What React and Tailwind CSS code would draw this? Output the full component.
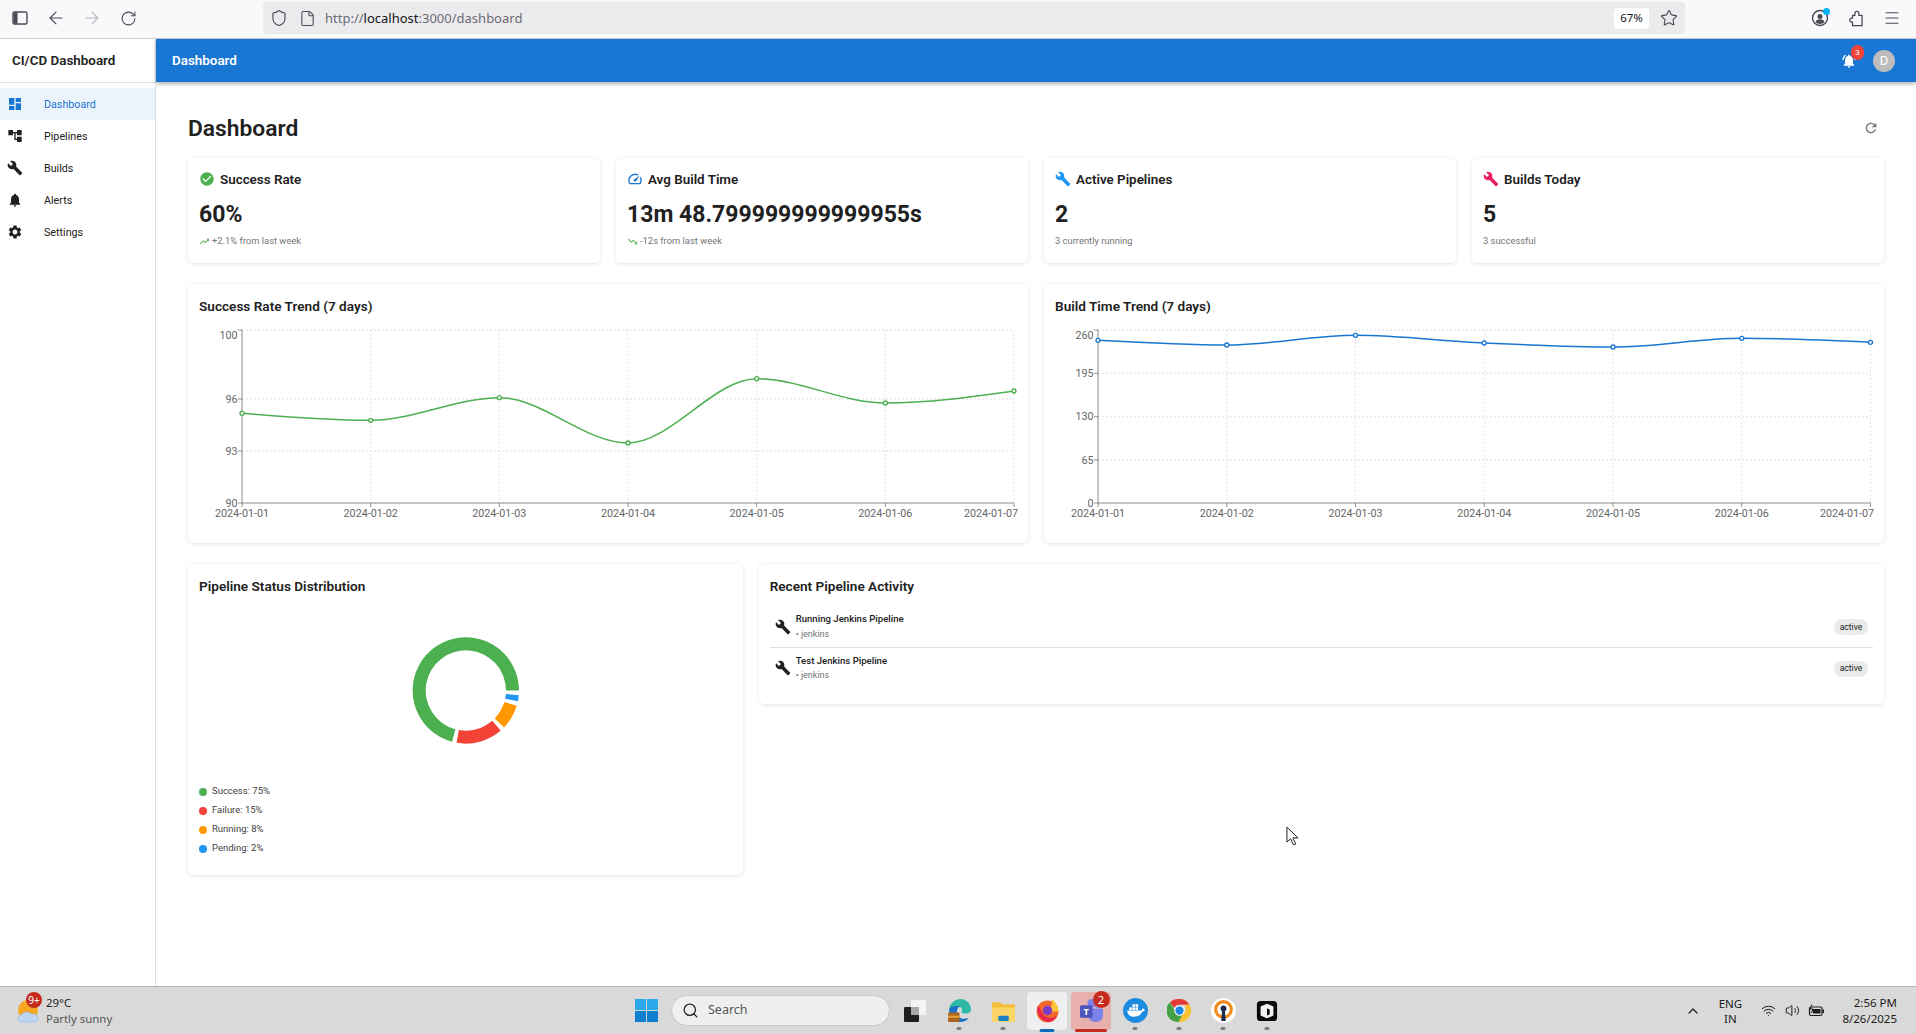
// CI/CD dashboard inside a browser window, Windows taskbar below
import React from "react";
import {
  ArrowLeft,
  ArrowRight,
  RotateCw,
  Shield,
  File,
  Star,
  Menu,
  ChevronUp,
  Wifi,
  Volume2,
  Search,
} from "lucide-react";

const ICONS = {
  dashboard: "M3 13h8V3H3v10zm0 8h8v-6H3v6zm10 0h8V11h-8v10zm0-18v6h8V3h-8z",
  tree: "M22 11V3h-7v3H9V3H2v8h7V8h2v10h4v3h7v-8h-7v3h-2V8h2v3z",
  build:
    "M22.7 19l-9.1-9.1c.9-2.3.4-5-1.5-6.9-2-2-5-2.4-7.4-1.3L9 6 6 9 1.6 4.7C.4 7.1.9 10.1 2.9 12.1c1.9 1.9 4.6 2.4 6.9 1.5l9.1 9.1c.4.4 1 .4 1.4 0l2.3-2.3c.5-.4.5-1.1.1-1.4z",
  bell: "M12 22c1.1 0 2-.9 2-2h-4c0 1.1.89 2 2 2zm6-6v-5c0-3.07-1.64-5.64-4.5-6.32V4c0-.83-.67-1.5-1.5-1.5s-1.5.67-1.5 1.5v.68C7.63 5.36 6 7.92 6 11v5l-2 2v1h16v-1l-2-2z",
  bellActive:
    "M7.58 4.08L6.15 2.65C3.75 4.48 2.17 7.3 2.03 10.5h2c.15-2.65 1.51-4.97 3.55-6.42zm12.39 6.42h2c-.15-3.2-1.73-6.02-4.12-7.85l-1.42 1.43c2.02 1.45 3.39 3.77 3.54 6.42zM18 11c0-3.07-1.64-5.64-4.5-6.32V4c0-.83-.67-1.5-1.5-1.5s-1.5.67-1.5 1.5v.68C7.63 5.36 6 7.92 6 11v5l-2 2v1h16v-1l-2-2v-5zm-6 11c.14 0 .27-.01.4-.04.65-.14 1.18-.58 1.44-1.18.1-.24.15-.5.15-.78h-4c.01 1.1.9 2 2.01 2z",
  settings:
    "M19.14 12.94c.04-.3.06-.61.06-.94 0-.32-.02-.64-.07-.94l2.03-1.58c.18-.14.23-.41.12-.61l-1.92-3.32c-.12-.22-.37-.29-.59-.22l-2.39.96c-.5-.38-1.03-.7-1.62-.94l-.36-2.54c-.04-.24-.24-.41-.48-.41h-3.84c-.24 0-.43.17-.47.41l-.36 2.54c-.59.24-1.13.57-1.62.94l-2.39-.96c-.22-.08-.47 0-.59.22L2.74 8.87c-.12.21-.08.47.12.61l2.03 1.58c-.05.3-.09.63-.09.94s.02.64.07.94l-2.03 1.58c-.18.14-.23.41-.12.61l1.92 3.32c.12.22.37.29.59.22l2.39-.96c.5.38 1.03.7 1.62.94l.36 2.54c.05.24.24.41.48.41h3.84c.24 0 .44-.17.47-.41l.36-2.54c.59-.24 1.13-.56 1.62-.94l2.39.96c.22.08.47 0 .59-.22l1.92-3.32c.12-.22.07-.47-.12-.61l-2.01-1.58zM12 15.6c-1.98 0-3.6-1.62-3.6-3.6s1.62-3.6 3.6-3.6 3.6 1.62 3.6 3.6-1.62 3.6-3.6 3.6z",
  check:
    "M12 2C6.48 2 2 6.48 2 12s4.48 10 10 10 10-4.48 10-10S17.52 2 12 2zm-2 15l-5-5 1.41-1.41L10 14.17l7.59-7.59L19 8l-9 9z",
  speed:
    "M20.38 8.57l-1.23 1.85a8 8 0 0 1-.22 7.58H5.07A8 8 0 0 1 15.58 6.85l1.85-1.23A10 10 0 0 0 3.35 19a2 2 0 0 0 1.72 1h13.85a2 2 0 0 0 1.74-1 10 10 0 0 0-.27-10.44zm-9.79 6.84a2 2 0 0 0 2.83 0l5.66-8.49-8.49 5.66a2 2 0 0 0 0 2.83z",
  up: "M16 6l2.29 2.29-4.88 4.88-4-4L2 16.59 3.41 18l6-6 4 4 6.3-6.29L22 12V6z",
  down: "M16 18l2.29-2.29-4.88-4.88-4 4L2 7.41 3.41 6l6 6 4-4 6.3 6.29L22 12v6z",
  refresh:
    "M17.65 6.35C16.2 4.9 14.21 4 12 4c-4.42 0-7.99 3.58-7.99 8s3.57 8 7.99 8c3.73 0 6.84-2.55 7.73-6h-2.08c-.82 2.33-3.04 4-5.65 4-3.31 0-6-2.69-6-6s2.69-6 6-6c1.66 0 3.14.69 4.22 1.78L13 11h7V4l-2.35 2.35z",
};

const Icon = ({ name, className }) => (
  <svg viewBox="0 0 24 24" className={className} fill="currentColor">
    <path d={ICONS[name]} />
  </svg>
);

const navItems = [
  { label: "Dashboard", icon: "dashboard", active: true },
  { label: "Pipelines", icon: "tree" },
  { label: "Builds", icon: "build" },
  { label: "Alerts", icon: "bell" },
  { label: "Settings", icon: "settings" },
];

const stats = [
  { title: "Success Rate", icon: "check", iconClass: "text-[#4caf50]", value: "60%", trend: "up", sub: "+2.1% from last week" },
  { title: "Avg Build Time", icon: "speed", iconClass: "text-[#1976d2]", value: "13m 48.799999999999955s", trend: "down", sub: "-12s from last week" },
  { title: "Active Pipelines", icon: "build", iconClass: "text-[#2196f3]", value: "2", sub: "3 currently running" },
  { title: "Builds Today", icon: "build", iconClass: "text-[#e91e63]", value: "5", sub: "3 successful" },
];

const days = ["2024-01-01", "2024-01-02", "2024-01-03", "2024-01-04", "2024-01-05", "2024-01-06", "2024-01-07"];

const successChart = {
  title: "Success Rate Trend (7 days)",
  viewBox: "199 325 818 205",
  left: 242,
  right: 1014,
  color: "#4caf50",
  ticks: [
    { label: "100", y: 330, textY: 335 },
    { label: "96", y: 399 },
    { label: "93", y: 451 },
    { label: "90", y: 503, textY: 503 },
  ],
  points: [413.3, 420.3, 397.7, 443, 378.7, 403, 391],
  lastLabelEnd: 1018,
};

const buildChart = {
  title: "Build Time Trend (7 days)",
  viewBox: "1055 325 818 205",
  left: 1098,
  right: 1870.5,
  color: "#1976d2",
  ticks: [
    { label: "260", y: 330, textY: 335 },
    { label: "195", y: 373.3 },
    { label: "130", y: 416.7 },
    { label: "65", y: 460 },
    { label: "0", y: 503, textY: 503 },
  ],
  points: [340.3, 345, 335.3, 343, 347, 338.3, 342.3],
  lastLabelEnd: 1874,
};

// same curve as recharts' type="monotone"
const monotonePath = (pts) => {
  const n = pts.length;
  const s = [];
  for (let i = 0; i < n - 1; i++) {
    s.push((pts[i + 1][1] - pts[i][1]) / (pts[i + 1][0] - pts[i][0]));
  }
  const t = new Array(n).fill(0);
  for (let i = 1; i < n - 1; i++) {
    const h0 = pts[i][0] - pts[i - 1][0];
    const h1 = pts[i + 1][0] - pts[i][0];
    const p = (s[i - 1] * h1 + s[i] * h0) / (h0 + h1);
    t[i] =
      (Math.sign(s[i - 1]) + Math.sign(s[i])) *
      Math.min(Math.abs(s[i - 1]), Math.abs(s[i]), 0.5 * Math.abs(p));
  }
  t[0] = (3 * s[0] - t[1]) / 2;
  t[n - 1] = (3 * s[n - 2] - t[n - 2]) / 2;
  let d = `M${pts[0][0]},${pts[0][1]}`;
  for (let i = 0; i < n - 1; i++) {
    const dx = (pts[i + 1][0] - pts[i][0]) / 3;
    d += `C${pts[i][0] + dx},${pts[i][1] + dx * t[i]} ${pts[i + 1][0] - dx},${pts[i + 1][1] - dx * t[i + 1]} ${pts[i + 1][0]},${pts[i + 1][1]}`;
  }
  return d;
};

const TOP = 330;
const BOTTOM = 503;

const TrendChart = ({ chart }) => {
  const step = (chart.right - chart.left) / 6;
  const xs = days.map((_, i) => chart.left + step * i);
  const pts = chart.points.map((y, i) => [xs[i], y]);
  return (
    <svg viewBox={chart.viewBox} className="block w-[818px] h-[205px] overflow-visible">
      {chart.ticks.map((t) => (
        <line key={t.label} x1={chart.left} x2={chart.right} y1={t.y} y2={t.y} stroke="#d6d6d6" strokeWidth="0.8" strokeDasharray="2 2" />
      ))}
      {xs.map((x) => (
        <line key={x} x1={x} x2={x} y1={TOP} y2={BOTTOM} stroke="#dedede" strokeWidth="0.8" strokeDasharray="2 2" />
      ))}
      <line x1={chart.left} x2={chart.left} y1={TOP} y2={BOTTOM} stroke="#777" strokeWidth="0.8" />
      <line x1={chart.left} x2={chart.right} y1={BOTTOM} y2={BOTTOM} stroke="#777" strokeWidth="0.8" />
      {chart.ticks.map((t) => (
        <g key={t.label}>
          <line x1={chart.left - 4} x2={chart.left} y1={t.y} y2={t.y} stroke="#777" strokeWidth="0.8" />
          <text x={chart.left - 4.5} y={(t.textY ?? t.y) + 3.7} textAnchor="end" fontSize="10.72" fill="#666">
            {t.label}
          </text>
        </g>
      ))}
      {days.map((d, i) => (
        <g key={d}>
          <line x1={xs[i]} x2={xs[i]} y1={BOTTOM} y2={BOTTOM + 4} stroke="#777" strokeWidth="0.8" />
          <text
            x={i === 6 ? chart.lastLabelEnd : xs[i]}
            y={BOTTOM + 14}
            textAnchor={i === 6 ? "end" : "middle"}
            fontSize="10.72"
            fill="#666"
          >
            {d}
          </text>
        </g>
      ))}
      <path d={monotonePath(pts)} fill="none" stroke={chart.color} strokeWidth="1.5" />
      {pts.map(([x, y]) => (
        <circle key={x} cx={x} cy={y} r="2" fill="#fff" stroke={chart.color} strokeWidth="1.34" />
      ))}
    </svg>
  );
};

const slices = [
  { label: "Success: 75%", color: "#4caf50", from: 0, to: 255 },
  { label: "Failure: 15%", color: "#f44336", from: 260, to: 311 },
  { label: "Running: 8%", color: "#ff9800", from: 316, to: 343.2 },
  { label: "Pending: 2%", color: "#2196f3", from: 348.2, to: 355 },
];

const arcPath = (from, to) => {
  const cx = 466;
  const cy = 690.5;
  const R = 53.2;
  const r = 40.2;
  const pt = (rad, a) => {
    const t = (a * Math.PI) / 180;
    return `${cx + rad * Math.cos(t)},${cy - rad * Math.sin(t)}`;
  };
  const large = to - from > 180 ? 1 : 0;
  return `M${pt(R, from)}A${R},${R} 0 ${large} 0 ${pt(R, to)}L${pt(r, to)}A${r},${r} 0 ${large} 1 ${pt(r, from)}Z`;
};

const activity = [
  { name: "Running Jenkins Pipeline", row: "pt-[14px] pb-[7px] border-b border-[#e0e0e0]", gap: "mt-[3px]" },
  { name: "Test Jenkins Pipeline", row: "pt-[7px] pb-[7px]", gap: "mt-[2px]" },
];

const cardClass =
  "bg-white rounded-[5px] shadow-[0_1px_4px_rgba(0,0,0,0.1),0_0_2px_rgba(0,0,0,0.03)]";

const BrowserBar = () => (
  <div className="flex items-start h-[39px] shrink-0 pt-[2px] bg-[#f9f9fb] border-b border-[#cfcfd8] text-[#4a4a55] font-['Noto_Sans',sans-serif]">
    <div className="flex pl-[2px]">
      <div className="w-[36px] h-[32px] flex items-center justify-center">
        <svg viewBox="0 0 18 18" className="w-[18px] h-[18px]" fill="none" stroke="currentColor" strokeWidth="1.4">
          <rect x="2" y="3" width="14" height="12" rx="1.500" />
          <rect x="2.500" y="3.500" width="4" height="11" fill="currentColor" stroke="none" />
        </svg>
      </div>
      <div className="w-[36px] h-[32px] flex items-center justify-center">
        <ArrowLeft size={20} strokeWidth={1.4} />
      </div>
      <div className="w-[36px] h-[32px] flex items-center justify-center text-[#b4b4ba]">
        <ArrowRight size={20} strokeWidth={1.4} />
      </div>
      <div className="w-[36px] h-[32px] flex items-center justify-center">
        <RotateCw size={17} strokeWidth={1.5} />
      </div>
    </div>
    <div className="flex-1 mx-[117px] h-[32px] bg-[#ebebed] rounded-[4px] flex items-center pl-[7px] pr-[7px]">
      <Shield size={18} strokeWidth={1.5} />
      <File size={17} strokeWidth={1.5} className="ml-[11px]" />
      <span className="ml-[9px] mt-[1px] text-[13px] text-[#6b6b75]">
        http://<span className="text-[#15141a]">localhost</span>:3000/dashboard
      </span>
      <div className="ml-auto w-[35px] h-[21px] bg-white rounded-[4px] flex items-center justify-center text-[11.5px] text-[#15141a]">
        67%
      </div>
      <Star size={18} strokeWidth={1.5} className="ml-[11px]" />
    </div>
    <div className="flex pr-[6px]">
      <div className="relative w-[36px] h-[32px] flex items-center justify-center">
        <svg viewBox="0 0 18 18" className="w-[18px] h-[18px]" fill="currentColor">
          <circle cx="9" cy="9" r="7.500" fill="none" stroke="currentColor" strokeWidth="1.400" />
          <circle cx="9" cy="7.500" r="2.500" />
          <path d="M4.500 13c.5-2 2.200-2.800 4.500-2.800s4 .8 4.500 2.800c-1 1.200-2.700 2-4.500 2s-3.500-.8-4.500-2z" />
        </svg>
        <span className="absolute top-[6px] right-[8px] w-[7px] h-[7px] rounded-full bg-[#00b3f4]" />
      </div>
      <div className="w-[36px] h-[32px] flex items-center justify-center">
        <svg viewBox="0 0 24 24" className="w-[19px] h-[19px]" fill="none" stroke="currentColor" strokeWidth="1.600">
          <path d="M7 21h12V8h-4V5.500a2.500 2.500 0 0 0-5 0V8H7v3.500H6a2.500 2.500 0 0 0 0 5h1z" />
        </svg>
      </div>
      <div className="w-[36px] h-[32px] flex items-center justify-center">
        <Menu size={18} strokeWidth={1.4} />
      </div>
    </div>
  </div>
);

const Sidebar = () => (
  <aside className="w-[156px] shrink-0 border-r border-[#e0e0e0] bg-white">
    <div className="h-[44px] border-b border-[#e0e0e0] flex items-center pl-[12px] pt-[1px] text-[13.4px] font-semibold text-[#212121]">
      CI/CD Dashboard
    </div>
    <nav className="pt-[5px]">
      {navItems.map((item) => (
        <div
          key={item.label}
          className={`h-[32px] flex items-center pl-[7px] text-[10.72px] ${
            item.active ? "bg-[#ebf3fb] text-[#1976d2]" : "text-[#212121]"
          }`}
        >
          <Icon name={item.icon} className="w-[16px] h-[16px] mr-[21px]" />
          <span className="pt-[2px]">{item.label}</span>
        </div>
      ))}
    </nav>
  </aside>
);

const StatCard = ({ stat }) => (
  <div className={`${cardClass} h-[105px] px-[11px] pt-[11px]`}>
    <div className="flex items-center h-[20px] text-[#212121]">
      <Icon name={stat.icon} className={`w-[16px] h-[16px] mr-[5px] ${stat.iconClass}`} />
      <span className="pt-[2px] text-[13.4px] font-semibold">{stat.title}</span>
    </div>
    <div className="mt-[11.5px] h-[27px] leading-[27px] text-[23px] font-bold text-[#212121]">
      {stat.value}
    </div>
    <div className="mt-[7.5px] flex items-center h-[12px] text-[9.38px] text-[#757575]">
      {stat.trend && <Icon name={stat.trend} className="w-[11px] h-[11px] mr-[2px] text-[#4caf50]" />}
      {stat.sub}
    </div>
  </div>
);

const CardTitle = ({ children }) => (
  <div className="h-[24px] pb-[1px] flex items-center text-[13.6px] font-semibold text-[#212121]">{children}</div>
);

const Content = () => (
  <div className="flex-1 px-[32px] pt-[30px]">
    <div className="h-[30px] flex items-center justify-between mb-[16px]">
      <h1 className="pt-[5px] text-[22.8px] font-semibold text-[#212121]">Dashboard</h1>
      <Icon name="refresh" className="w-[16px] h-[16px] mr-[5px] mt-[1px] text-[#757575]" />
    </div>

    <div className="flex flex-col gap-[21px]">
      <div className="grid grid-cols-4 gap-[16px]">
        {stats.map((s) => (
          <StatCard key={s.title} stat={s} />
        ))}
      </div>

      <div className="grid grid-cols-2 gap-[16px]">
        {[successChart, buildChart].map((c) => (
          <div key={c.title} className={`${cardClass} h-[259px] px-[11px] pt-[11px]`}>
            <CardTitle>{c.title}</CardTitle>
            <div className="mt-[6px]">
              <TrendChart chart={c} />
            </div>
          </div>
        ))}
      </div>

      <div className="grid grid-cols-3 gap-[16px] items-start">
        <div className={`${cardClass} h-[311px] px-[11px] pt-[11px]`}>
          <CardTitle>Pipeline Status Distribution</CardTitle>
          <svg viewBox="199 600 533 180" className="block w-full h-[180px] mt-[1px]">
            {slices.map((s) => (
              <path key={s.label} d={arcPath(s.from, s.to)} fill={s.color} />
            ))}
          </svg>
          <div className="mt-[2px]">
            {slices.map((s) => (
              <div key={s.label} className="h-[19px] flex items-center text-[9.5px] text-[#424242]">
                <span className="w-[8px] h-[8px] rounded-full mr-[5px]" style={{ backgroundColor: s.color }} />
                {s.label}
              </div>
            ))}
          </div>
        </div>

        <div className={`${cardClass} col-span-2 h-[140px] pl-[11px] pr-[11px] pt-[11px]`}>
          <CardTitle>Recent Pipeline Activity</CardTitle>
          {activity.map((a) => (
            <div key={a.name} className={`flex items-center pl-[5px] pr-[5px] ${a.row}`}>
              <Icon name="build" className="w-[16px] h-[16px] mr-[5px] text-[#212121]" />
              <div className="flex-1">
                <div className="text-[9.6px] leading-[12px] font-medium text-[#212121]">{a.name}</div>
                <div className={`text-[9px] leading-[12px] text-[#757575] ${a.gap}`}>• jenkins</div>
              </div>
              <span className="mt-[1px] w-[34px] h-[16px] rounded-full bg-[#ebebeb] flex items-center justify-center text-[8.6px] text-[#212121]">
                active
              </span>
            </div>
          ))}
        </div>
      </div>
    </div>
  </div>
);

const TaskSlot = ({ children, box, bar, dot = true }) => (
  <div className="relative w-[44px] h-[48px] flex items-center justify-center">
    {box && <span className={`absolute top-[5px] bottom-[5px] left-[2px] right-[2px] rounded-[4px] ${box}`} />}
    <span className="relative">{children}</span>
    {bar && <span className={`absolute bottom-[3px] left-1/2 -translate-x-1/2 h-[2.5px] rounded-full ${bar}`} />}
    {dot && !bar && <span className="absolute bottom-[5px] left-1/2 -translate-x-1/2 w-[5px] h-[2.5px] rounded-full bg-[#7d7d7d]" />}
  </div>
);

const Taskbar = () => (
  <div className="flex items-center h-[48px] shrink-0 bg-[#d9d9d9] border-t border-[#b4b4b4] font-['Noto_Sans',sans-serif] text-[#1c1c1c]">
    <div className="w-[624px] shrink-0 flex items-center pl-[17px]">
      <div className="relative w-[24px] h-[28px]">
        <svg viewBox="0 0 24 28" className="w-[24px] h-[28px]">
          <circle cx="11" cy="13" r="10" fill="#f7a823" />
          <path d="M5 25c-3 0-4-2-4-4s2-3.500 4-3.500c1-3 7-3.500 9-.500 3-.500 7 .500 7 4s-2 4-4 4z" fill="#bcd6f2" stroke="#8fb4e0" strokeWidth="0.6" />
        </svg>
        <span className="absolute -top-[5px] left-[9px] w-[16px] h-[16px] rounded-full bg-[#c42b1c] text-white text-[10px] leading-[16px] text-center">
          9+
        </span>
      </div>
      <div className="ml-[5px] text-[11.4px] leading-[16px]">
        <div>29°C</div>
        <div className="text-[#555]">Partly sunny</div>
      </div>
    </div>

    <div className="w-[44px] shrink-0 flex justify-center">
      <svg viewBox="0 0 24 24" className="w-[23px] h-[23px]">
        <rect x="0" y="0" width="11.500" height="11.500" fill="#29a8ea" />
        <rect x="12.500" y="0" width="11.500" height="11.500" fill="#29a8ea" />
        <rect x="0" y="12.500" width="11.500" height="11.500" fill="#0f7fd0" />
        <rect x="12.500" y="12.500" width="11.500" height="11.500" fill="#0f7fd0" />
      </svg>
    </div>

    <div className="ml-[3px] w-[219px] h-[31px] rounded-full bg-[#efefef] border border-[#c9c9c9] flex items-center pl-[10px] text-[12.5px] text-[#555]">
      <Search size={17} strokeWidth={1.8} className="text-[#222]" />
      <span className="ml-[9px]">Search</span>
    </div>

    <div className="ml-[3px] flex">
      <TaskSlot dot={false}>
        <svg viewBox="0 0 24 24" className="block w-[24px] h-[24px]">
          <rect x="8" y="1" width="15" height="15" rx="1" fill="#f4f4f4" />
          <rect x="1" y="8" width="15" height="15" rx="1" fill="#1f1f1f" />
          <rect x="8" y="8" width="8" height="8" fill="#a8a8a8" />
        </svg>
      </TaskSlot>
      <TaskSlot>
        <svg viewBox="0 0 24 24" className="block w-[25px] h-[25px]">
          <path d="M2 12C2 6 7 1 13 1c6 0 10 5 10 10 0 3-3 4-6 4-2 0-3-1-3-2 1-2 0-5-4-5-4 0-8 2-8 4z" fill="#2fb8a6" />
          <path d="M2 12c0 6 5 11 11 11 3 0 6-1 8-4-5 2-10 1-11-4-1-3 0-6 3-7-6-1-11 0-11 4z" fill="#1a73c9" />
          <rect x="1" y="14" width="11" height="9" rx="1" fill="#a8651c" />
          <rect x="1" y="17" width="11" height="2" fill="#e8a33d" />
        </svg>
      </TaskSlot>
      <TaskSlot>
        <svg viewBox="0 0 24 24" className="block w-[25px] h-[25px]">
          <path d="M1 5a1 1 0 0 1 1-1h7l2 2h11a1 1 0 0 1 1 1v15H1z" fill="#f2bd3b" />
          <path d="M1 9h22v13a1 1 0 0 1-1 1H2a1 1 0 0 1-1-1z" fill="#fbd667" />
          <rect x="7" y="17" width="10" height="5" rx="1" fill="#1d7fc4" />
        </svg>
      </TaskSlot>
      <TaskSlot box="bg-[#efefef]" bar="w-[15px] bg-[#0f6cbd]">
        <svg viewBox="0 0 24 24" className="block w-[25px] h-[25px]">
          <circle cx="12" cy="13" r="10.500" fill="#f2682a" />
          <path d="M16 1c4 3 6.500 7 6.500 12H14c1-3 3-7 2-12z" fill="#ffc53a" />
          <path d="M3 7c-2 6 1 14 9 16 5 0 8-3 9-6-4 3-10 3-13-1C6 13 5 10 3 7z" fill="#e8254f" />
          <circle cx="12" cy="12" r="4.500" fill="#7a3bc9" />
        </svg>
      </TaskSlot>
      <TaskSlot box="bg-[#e8b0ac]" bar="w-[32px] bg-[#c42b1c]">
        <div className="relative">
          <svg viewBox="0 0 24 24" className="block w-[25px] h-[25px]">
            <circle cx="18" cy="6" r="3.500" fill="#7b83eb" />
            <circle cx="12" cy="5" r="4" fill="#7b83eb" />
            <path d="M9 10h13a1 1 0 0 1 1 1v6c0 3-2 6-7 6s-7-3-7-6z" fill="#7b83eb" />
            <rect x="1" y="7" width="12" height="12" rx="1.500" fill="#4b53bc" />
            <text x="7" y="16.500" textAnchor="middle" fontSize="9" fontWeight="700" fill="#fff">T</text>
          </svg>
          <span className="absolute -top-[7px] -right-[6px] w-[17px] h-[17px] rounded-full bg-[#c42b1c] text-white text-[11px] leading-[17px] text-center">
            2
          </span>
        </div>
      </TaskSlot>
      <TaskSlot>
        <svg viewBox="0 0 24 24" className="block w-[25px] h-[25px]">
          <circle cx="12" cy="12" r="12" fill="#1d8ce0" />
          <path d="M4 12h13c1 0 1.500-1 1.500-2 1 0 2 .500 2.500 1.500-.500 1-1.500 1.500-2.500 1.500-1 3-4 5-8 5-4 0-6-2-6.500-6z" fill="#fff" />
          <rect x="6" y="9" width="2.500" height="2.500" fill="#fff" />
          <rect x="9" y="9" width="2.500" height="2.500" fill="#fff" />
          <rect x="12" y="9" width="2.500" height="2.500" fill="#fff" />
          <rect x="9" y="6" width="2.500" height="2.500" fill="#fff" />
          <rect x="12" y="6" width="2.500" height="2.500" fill="#fff" />
        </svg>
      </TaskSlot>
      <TaskSlot>
        <svg viewBox="0 0 24 24" className="block w-[25px] h-[25px]">
          <path d="M12 1a11 11 0 0 1 9.500 5.500H12a5.500 5.500 0 0 0-5 3L3 4a11 11 0 0 1 9-3z" fill="#e53935" />
          <path d="M21.500 6.500A11 11 0 0 1 11 23l4.500-8a5.500 5.500 0 0 0 1-8.500z" fill="#fbc02d" />
          <path d="M3 4l4.500 8a5.500 5.500 0 0 0 8 3L11 23A11 11 0 0 1 3 4z" fill="#43a047" />
          <circle cx="12" cy="12" r="4.500" fill="#1e88e5" stroke="#fff" strokeWidth="1" />
        </svg>
      </TaskSlot>
      <TaskSlot>
        <svg viewBox="0 0 24 24" className="block w-[25px] h-[25px]">
          <circle cx="12" cy="12" r="12" fill="#fff" />
          <circle cx="12" cy="11" r="7.500" fill="none" stroke="#f08a1d" strokeWidth="3" />
          <circle cx="12" cy="10" r="2.800" fill="#1b2a4a" />
          <path d="M10.800 11h2.400l1 11h-4.400z" fill="#1b2a4a" />
        </svg>
      </TaskSlot>
      <TaskSlot>
        <svg viewBox="0 0 24 24" className="block w-[22px] h-[22px]">
          <rect x="1" y="1" width="22" height="22" rx="4" fill="#0a0a0a" />
          <path d="M12 4l7 3v10l-7 3-7-3V7z" fill="#f2f2f2" />
          <path d="M12 9l3 1.500v5L12 17z" fill="#0a0a0a" />
        </svg>
      </TaskSlot>
    </div>

    <div className="ml-auto flex items-center pr-[19px] text-[11.5px]">
      <ChevronUp size={16} strokeWidth={1.8} />
      <div className="ml-[13px] w-[32px] text-center leading-[15px]">
        <div>ENG</div>
        <div>IN</div>
      </div>
      <Wifi size={15} strokeWidth={1.6} className="ml-[15px]" />
      <Volume2 size={15} strokeWidth={1.6} className="ml-[9px]" />
      <svg viewBox="0 0 17 14" className="ml-[8px] w-[17px] h-[14px]" fill="none" stroke="#1c1c1c" strokeWidth="1.200">
        <rect x="1.500" y="3" width="12.500" height="8.500" rx="1.500" />
        <rect x="5" y="5" width="7.500" height="4.500" fill="#1c1c1c" stroke="none" />
        <rect x="14.500" y="5.500" width="1.500" height="3.500" fill="#1c1c1c" stroke="none" />
        <path d="M4 .5L2 5h3L3.500 9" strokeWidth="1" />
      </svg>
      <div className="ml-[17px] text-right leading-[16px]">
        <div>2:56 PM</div>
        <div>8/26/2025</div>
      </div>
    </div>
  </div>
);

export default function App() {
  return (
    <div className="relative flex flex-col h-screen w-full overflow-hidden bg-white font-[Roboto,sans-serif]">
      <BrowserBar />
      <div className="flex flex-1 min-h-0">
        <Sidebar />
        <main className="flex-1 min-w-0 flex flex-col">
          <header className="relative h-[43px] shrink-0 bg-[#1976d2] shadow-[0_2px_4px_rgba(0,0,0,0.3)] flex items-center pl-[16px] pr-[21px] text-white">
            <span className="pt-[1px] text-[13.4px] font-semibold">Dashboard</span>
            <div className="ml-auto relative w-[16px] h-[16px] mr-[16px]">
              <Icon name="bellActive" className="w-[16px] h-[16px]" />
              <span className="absolute -top-[7.5px] left-[10px] w-[13px] h-[15px] rounded-full bg-[#f44336] text-[8px] leading-[15px] text-center">
                3
              </span>
            </div>
            <div className="w-[22px] h-[22px] rounded-full bg-[#bdbdbd] flex items-center justify-center text-[13px]">
              D
            </div>
          </header>
          <Content />
        </main>
      </div>
      <Taskbar />
      {/* mouse pointer */}
      <svg viewBox="0 0 14 22" className="absolute left-[1286px] top-[826px] w-[13px] h-[21px]">
        <path d="M1 1v16l4-3.500 3 6.500 2.500-1-3-6.500H13z" fill="#fff" stroke="#111" strokeWidth="1" />
      </svg>
    </div>
  );
}
